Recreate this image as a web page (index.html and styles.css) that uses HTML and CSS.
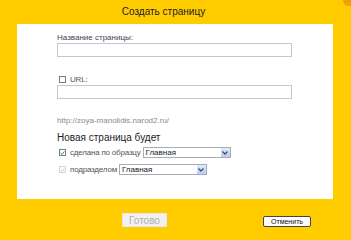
FILE: index.html
```html
<!DOCTYPE html>
<html lang="ru">
  <head>
    <title>Создать страницу</title>
    <link rel="stylesheet" href="styles.css">
  </head>
  <body>
    <span class="corner"></span>
    <h1 class="title">Создать страницу</h1>
    <div class="panel">
      <label class="label" for="name">Название страницы:</label>
      <input class="field" id="name" type="text">

      <div class="check-row url-row">
        <span class="box"></span>
        <span class="label">URL:</span>
      </div>
      <input class="field" type="text">

      <p class="site">http://zoya-manolidis.narod2.ru/</p>
      <h2 class="subtitle">Новая страница будет</h2>

      <div class="check-row">
        <span class="box checked">
          <svg width="6" height="6" viewBox="0 0 6 6"><path d="M0.8 3 L2.4 4.6 L5.2 1.2" fill="none" stroke="#3c8a3c" stroke-width="1.1"/></svg>
        </span>
        <span class="label">сделана по образцу</span>
        <div class="select">
          <span>Главная</span>
          <span class="arrow"><svg width="6" height="4" viewBox="0 0 6 4"><path d="M0.5 0.5 L3 3 L5.5 0.5" fill="none" stroke="#2b4f9a" stroke-width="1.3"/></svg></span>
        </div>
      </div>

      <div class="check-row">
        <span class="box disabled">
          <svg width="6" height="6" viewBox="0 0 6 6"><path d="M0.8 3 L2.4 4.6 L5.2 1.2" fill="none" stroke="#c4c4c4" stroke-width="1.1"/></svg>
        </span>
        <span class="label">подразделом</span>
        <div class="select">
          <span>Главная</span>
          <span class="arrow"><svg width="6" height="4" viewBox="0 0 6 4"><path d="M0.5 0.5 L3 3 L5.5 0.5" fill="none" stroke="#2b4f9a" stroke-width="1.3"/></svg></span>
        </div>
      </div>
    </div>

    <div class="actions">
      <button type="button" class="btn-done" disabled>Готово</button>
      <button type="button" class="btn-cancel">Отменить</button>
    </div>
  </body>
</html>
```

FILE: styles.css
```css
body {
  margin: 0;
  background-color: #ffcc00;
  font-family: "Liberation Sans", Arial, sans-serif;
  color: #333;
  height: 240px;
  overflow: hidden;
  position: relative;
}

.corner {
  position: absolute;
  top: -6px;
  right: -4px;
  width: 12px;
  height: 12px;
  border-radius: 50%;
  background-color: #f0a000;
}

.title {
  margin: 0;
  padding-right: 24px;
  height: 24px;
  line-height: 24px;
  font-size: 10px;
  font-weight: normal;
  text-align: center;
  color: #222;
}

.panel {
  background-color: #fff;
  margin: 0 18px 0 17px;
  padding: 8px 0 0 40px;
  height: 167px;
}

.label {
  display: block;
  font-size: 8px;
  line-height: 11px;
  color: #4a3d57;
}

.field {
  display: block;
  box-sizing: border-box;
  width: 235px;
  height: 14px;
  margin: 0;
  padding: 0 2px;
  border: 1px solid #c8c8c8;
  background: #fff;
}

.check-row {
  display: flex;
  align-items: center;
  gap: 4px;
  height: 11px;
  margin-bottom: 6px;
}

.check-row .label {
  font-size: 8px;
  letter-spacing: -0.2px;
  color: #555;
}

.url-row {
  height: 9px;
  margin-top: 18px;
  margin-bottom: 1px;
}

.box {
  box-sizing: border-box;
  width: 7px;
  height: 7px;
  margin-left: 2px;
  border: 1px solid #6f7f96;
  background: #fff;
  display: flex;
  align-items: center;
  justify-content: center;
}

.box.disabled {
  border-color: #d4d4d4;
}

.site {
  margin: 17px 0 0;
  font-size: 8px;
  line-height: 10px;
  color: #8a8a8a;
}

.subtitle {
  margin: 5px 0 3px;
  font-size: 10px;
  line-height: 13px;
  font-weight: normal;
  color: #222;
}

.select {
  box-sizing: border-box;
  display: flex;
  align-items: center;
  justify-content: space-between;
  width: 88px;
  height: 11px;
  margin-left: -2px;
  padding-left: 2px;
  border: 1px solid #a5acb5;
  font-size: 8px;
  color: #222;
}

.arrow {
  width: 9px;
  height: 9px;
  display: flex;
  align-items: center;
  justify-content: center;
  background: linear-gradient(#e3ebf8, #bccbea);
}

.actions {
  display: flex;
  align-items: flex-start;
  padding: 14px 0 0 122px;
}

.btn-done {
  width: 45px;
  height: 14px;
  padding: 0;
  border: 1px solid #e6e6e6;
  background-color: #f1f1f1;
  color: #b0b0b0;
  font-family: "Liberation Sans", Arial, sans-serif;
  font-size: 10px;
}

.btn-cancel {
  margin-left: 96px;
  margin-top: 3px;
  width: 48px;
  height: 11px;
  padding: 0;
  border: 1px solid #444;
  border-radius: 2px;
  background-color: #fff;
  color: #111;
  font-family: "Liberation Sans", Arial, sans-serif;
  font-size: 7px;
}
```
